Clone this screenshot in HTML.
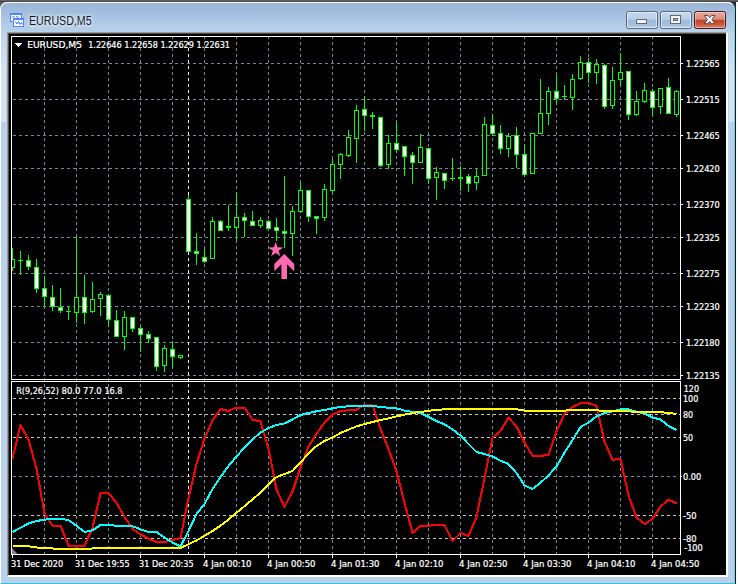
<!DOCTYPE html>
<html><head><meta charset="utf-8"><title>EURUSD,M5</title>
<style>
html,body{margin:0;padding:0;background:#fff;}
body{width:738px;height:584px;overflow:hidden;position:relative;font-family:"Liberation Sans",sans-serif;}
#win{position:absolute;left:0;top:2px;width:735px;height:582px;box-sizing:border-box;
 background:linear-gradient(#98b4d4 0px,#a3bedd 10px,#b4cde8 24px,#b9d1ea 30px,#b9d1ea 100%);
 border-top-left-radius:7px;border-top-right-radius:7px;}
#hl{position:absolute;left:0;top:2px;width:735px;height:582px;box-sizing:border-box;border-left:1px solid #fff;border-top:1px solid #fff;border-right:1px solid #5fd8f0;border-bottom:1px solid #28c4e4;border-top-left-radius:7px;border-top-right-radius:7px;}
#top{position:absolute;left:0;top:0;width:738px;height:2px;background:linear-gradient(#6e6e6e,#3c3c3c);}
#client{position:absolute;left:7px;top:32px;width:721px;height:545px;box-sizing:border-box;background:#000;
 border-left:1px solid #9a9a9a;border-top:1px solid #9a9a9a;border-right:2px solid #fff;border-bottom:2px solid #fff;}
#client2{position:absolute;left:8px;top:33px;width:718px;height:542px;box-sizing:border-box;border-left:1px solid #505050;border-top:1px solid #505050;}
#title{position:absolute;left:29px;top:13px;font-size:12.5px;line-height:16px;color:#0a0a14;opacity:.92;white-space:nowrap;transform-origin:0 0;transform:scaleX(0.85);text-shadow:0 0 4px #fff,0 0 6px #fff;}
.btn{position:absolute;top:11px;height:18px;width:32px;box-sizing:border-box;border:1px solid #56677f;border-radius:2.5px;
 background:linear-gradient(#c4d7ee 0%,#b9cfe9 46%,#9fbadb 50%,#a6c0df 80%,#b7cfea 100%);box-shadow:inset 0 0 0 1px rgba(255,255,255,.55);}
#bclose{border-color:#4a1a22;background:linear-gradient(#e8aa9c 0%,#dc8a76 46%,#c0442b 50%,#c95437 75%,#d98a72 100%);box-shadow:inset 0 0 0 1px rgba(255,255,255,.35);}
svg#c{position:absolute;left:0;top:0;}
</style></head><body>
<div id="top"></div><div style="position:absolute;left:735px;top:2px;width:1px;height:582px;background:#1c1212"></div><div style="position:absolute;left:0;top:2px;width:8px;height:8px;background:#585858"></div><div style="position:absolute;left:727px;top:2px;width:9px;height:8px;background:#2a2a2a"></div>
<div id="win"></div><div id="hl"></div>
<div id="title">EURUSD,M5</div>
<div class="btn" style="left:626px"></div>
<div class="btn" style="left:660px"></div>
<div class="btn" id="bclose" style="left:694px"></div>
<div style="position:absolute;left:1px;top:32px;width:5px;height:90px;background:linear-gradient(rgba(255,255,255,.05),rgba(255,255,255,.38) 40%,rgba(255,255,255,.38))"></div><div style="position:absolute;left:729px;top:32px;width:5px;height:90px;background:linear-gradient(rgba(255,255,255,.05),rgba(255,255,255,.38) 40%,rgba(255,255,255,.38))"></div><div id="client"></div><div id="client2"></div>
<svg width="738" height="40" style="position:absolute;left:0;top:0">
<!-- app icon -->
<g shape-rendering="crispEdges">
<rect x="10" y="13" width="12" height="9" fill="#4a86ff"/>
<rect x="11" y="15" width="10" height="6" fill="#fff"/>
<rect x="13" y="18" width="11" height="9" fill="#4a86ff"/>
<rect x="14" y="20" width="9" height="6" fill="#fff"/>
</g>
<polyline points="12,17.5 13.5,16 14.5,17.5" fill="none" stroke="#3b78f5" stroke-width="1"/>
<polyline points="16,16 17,17.5 18.5,16.5" fill="none" stroke="#3b78f5" stroke-width="1"/>
<polyline points="15.5,21.5 17,24 18.5,21.5 20,24.5 21.5,22.5 22.5,24.5" fill="none" stroke="#3b78f5" stroke-width="1"/>
<!-- minimize -->
<rect x="636.5" y="19.5" width="10" height="4" rx="1" fill="#f4f4f4" stroke="#5f6876" stroke-width="1" shape-rendering="crispEdges"/>
<!-- maximize -->
<rect x="670.5" y="15.5" width="10" height="8" rx="1" fill="#f4f4f4" stroke="#5f6876" stroke-width="1" shape-rendering="crispEdges"/>
<rect x="673.5" y="18.5" width="4" height="2" fill="#9db4d2" stroke="#5f6876" stroke-width="1" shape-rendering="crispEdges"/>
<!-- close -->
<path d="M704.4,15.5 L707.9,15.5 L709.7,17.7 L711.5,15.5 L715,15.5 L711.9,19.6 L715,23.7 L711.5,23.7 L709.7,21.5 L707.9,23.7 L704.4,23.7 L707.5,19.6 Z" fill="#fff" stroke="#46384a" stroke-width="0.9" stroke-linejoin="round"/>
</svg>
<svg id="c" width="738" height="584" viewBox="0 0 738 584">
<g shape-rendering="crispEdges" stroke="#778899" stroke-width="1" stroke-dasharray="3 3" fill="none">
<line x1="13" y1="63.5" x2="678" y2="63.5"/>
<line x1="13" y1="99.5" x2="678" y2="99.5"/>
<line x1="13" y1="135.5" x2="678" y2="135.5"/>
<line x1="13" y1="168.5" x2="678" y2="168.5"/>
<line x1="13" y1="204.5" x2="678" y2="204.5"/>
<line x1="13" y1="237.5" x2="678" y2="237.5"/>
<line x1="13" y1="273.5" x2="678" y2="273.5"/>
<line x1="13" y1="306.5" x2="678" y2="306.5"/>
<line x1="13" y1="342.5" x2="678" y2="342.5"/>
<line x1="13" y1="375.5" x2="678" y2="375.5"/>
<line x1="13" y1="476.5" x2="678" y2="476.5"/>
<line x1="44.5" y1="36" x2="44.5" y2="554"/>
<line x1="76.5" y1="36" x2="76.5" y2="554"/>
<line x1="108.5" y1="36" x2="108.5" y2="554"/>
<line x1="140.5" y1="36" x2="140.5" y2="554"/>
<line x1="172.5" y1="36" x2="172.5" y2="554"/>
<line x1="204.5" y1="36" x2="204.5" y2="554"/>
<line x1="236.5" y1="36" x2="236.5" y2="554"/>
<line x1="268.5" y1="36" x2="268.5" y2="554"/>
<line x1="300.5" y1="36" x2="300.5" y2="554"/>
<line x1="332.5" y1="36" x2="332.5" y2="554"/>
<line x1="364.5" y1="36" x2="364.5" y2="554"/>
<line x1="396.5" y1="36" x2="396.5" y2="554"/>
<line x1="428.5" y1="36" x2="428.5" y2="554"/>
<line x1="460.5" y1="36" x2="460.5" y2="554"/>
<line x1="492.5" y1="36" x2="492.5" y2="554"/>
<line x1="524.5" y1="36" x2="524.5" y2="554"/>
<line x1="556.5" y1="36" x2="556.5" y2="554"/>
<line x1="588.5" y1="36" x2="588.5" y2="554"/>
<line x1="620.5" y1="36" x2="620.5" y2="554"/>
<line x1="652.5" y1="36" x2="652.5" y2="554"/>
</g>
<g shape-rendering="crispEdges" stroke="#c8c8c8" stroke-width="1" stroke-dasharray="3 3" fill="none">
<line x1="13" y1="398.5" x2="680" y2="398.5"/>
<line x1="13" y1="414.5" x2="680" y2="414.5"/>
<line x1="13" y1="437.5" x2="680" y2="437.5"/>
<line x1="13" y1="515.5" x2="680" y2="515.5"/>
<line x1="13" y1="538.5" x2="680" y2="538.5"/>
</g>
<line shape-rendering="crispEdges" x1="188.5" y1="36" x2="188.5" y2="554" stroke="#f4f4f4" stroke-width="1" stroke-dasharray="3 3"/>
<clipPath id="cc"><rect x="12" y="37" width="668" height="342"/></clipPath>
<g shape-rendering="crispEdges" clip-path="url(#cc)">
<rect x="12" y="248" width="1" height="23" fill="#0f0"/>
<rect x="10" y="259" width="5" height="9" fill="#0f0"/>
<rect x="11" y="260" width="3" height="7" fill="#000"/>
<rect x="20" y="251" width="1" height="24" fill="#0f0"/>
<rect x="18" y="260" width="5" height="1" fill="#0f0"/>
<rect x="28" y="255" width="1" height="15" fill="#0f0"/>
<rect x="26" y="260" width="5" height="7" fill="#0f0"/>
<rect x="27" y="261" width="3" height="5" fill="#fff"/>
<rect x="36" y="259" width="1" height="34" fill="#0f0"/>
<rect x="34" y="267" width="5" height="22" fill="#0f0"/>
<rect x="35" y="268" width="3" height="20" fill="#fff"/>
<rect x="44" y="276" width="1" height="31" fill="#0f0"/>
<rect x="42" y="288" width="5" height="9" fill="#0f0"/>
<rect x="43" y="289" width="3" height="7" fill="#fff"/>
<rect x="52" y="285" width="1" height="26" fill="#0f0"/>
<rect x="50" y="297" width="5" height="10" fill="#0f0"/>
<rect x="51" y="298" width="3" height="8" fill="#fff"/>
<rect x="60" y="288" width="1" height="25" fill="#0f0"/>
<rect x="58" y="307" width="5" height="4" fill="#0f0"/>
<rect x="59" y="308" width="3" height="2" fill="#fff"/>
<rect x="68" y="306" width="1" height="14" fill="#0f0"/>
<rect x="66" y="311" width="5" height="1" fill="#0f0"/>
<rect x="76" y="237" width="1" height="86" fill="#0f0"/>
<rect x="74" y="297" width="5" height="16" fill="#0f0"/>
<rect x="75" y="298" width="3" height="14" fill="#000"/>
<rect x="84" y="275" width="1" height="49" fill="#0f0"/>
<rect x="82" y="297" width="5" height="16" fill="#0f0"/>
<rect x="83" y="298" width="3" height="14" fill="#fff"/>
<rect x="92" y="282" width="1" height="31" fill="#0f0"/>
<rect x="90" y="299" width="5" height="13" fill="#0f0"/>
<rect x="91" y="300" width="3" height="11" fill="#000"/>
<rect x="100" y="292" width="1" height="24" fill="#0f0"/>
<rect x="98" y="294" width="5" height="5" fill="#0f0"/>
<rect x="99" y="295" width="3" height="3" fill="#000"/>
<rect x="108" y="295" width="1" height="32" fill="#0f0"/>
<rect x="106" y="295" width="5" height="25" fill="#0f0"/>
<rect x="107" y="296" width="3" height="23" fill="#fff"/>
<rect x="116" y="310" width="1" height="27" fill="#0f0"/>
<rect x="114" y="320" width="5" height="17" fill="#0f0"/>
<rect x="115" y="321" width="3" height="15" fill="#fff"/>
<rect x="124" y="311" width="1" height="39" fill="#0f0"/>
<rect x="122" y="317" width="5" height="20" fill="#0f0"/>
<rect x="123" y="318" width="3" height="18" fill="#000"/>
<rect x="132" y="317" width="1" height="15" fill="#0f0"/>
<rect x="130" y="317" width="5" height="12" fill="#0f0"/>
<rect x="131" y="318" width="3" height="10" fill="#fff"/>
<rect x="140" y="326" width="1" height="26" fill="#0f0"/>
<rect x="138" y="328" width="5" height="7" fill="#0f0"/>
<rect x="139" y="329" width="3" height="5" fill="#fff"/>
<rect x="148" y="331" width="1" height="12" fill="#0f0"/>
<rect x="146" y="334" width="5" height="5" fill="#0f0"/>
<rect x="147" y="335" width="3" height="3" fill="#fff"/>
<rect x="156" y="337" width="1" height="34" fill="#0f0"/>
<rect x="154" y="337" width="5" height="30" fill="#0f0"/>
<rect x="155" y="338" width="3" height="28" fill="#fff"/>
<rect x="164" y="345" width="1" height="27" fill="#0f0"/>
<rect x="162" y="348" width="5" height="18" fill="#0f0"/>
<rect x="163" y="349" width="3" height="16" fill="#000"/>
<rect x="172" y="341" width="1" height="27" fill="#0f0"/>
<rect x="170" y="349" width="5" height="8" fill="#0f0"/>
<rect x="171" y="350" width="3" height="6" fill="#fff"/>
<rect x="180" y="355" width="1" height="4" fill="#0f0"/>
<rect x="178" y="355" width="5" height="3" fill="#0f0"/>
<rect x="179" y="356" width="3" height="1" fill="#000"/>
<rect x="188" y="195" width="1" height="57" fill="#0f0"/>
<rect x="186" y="199" width="5" height="53" fill="#0f0"/>
<rect x="187" y="200" width="3" height="51" fill="#fff"/>
<rect x="196" y="233" width="1" height="32" fill="#0f0"/>
<rect x="194" y="251" width="5" height="3" fill="#0f0"/>
<rect x="195" y="252" width="3" height="1" fill="#fff"/>
<rect x="204" y="249" width="1" height="14" fill="#0f0"/>
<rect x="202" y="257" width="5" height="5" fill="#0f0"/>
<rect x="203" y="258" width="3" height="3" fill="#fff"/>
<rect x="212" y="217" width="1" height="42" fill="#0f0"/>
<rect x="210" y="221" width="5" height="38" fill="#0f0"/>
<rect x="211" y="222" width="3" height="36" fill="#000"/>
<rect x="220" y="220" width="1" height="11" fill="#0f0"/>
<rect x="218" y="221" width="5" height="10" fill="#0f0"/>
<rect x="219" y="222" width="3" height="8" fill="#fff"/>
<rect x="228" y="205" width="1" height="26" fill="#0f0"/>
<rect x="226" y="226" width="5" height="2" fill="#0f0"/>
<rect x="236" y="192" width="1" height="49" fill="#0f0"/>
<rect x="234" y="217" width="5" height="11" fill="#0f0"/>
<rect x="235" y="218" width="3" height="9" fill="#000"/>
<rect x="244" y="213" width="1" height="24" fill="#0f0"/>
<rect x="242" y="217" width="5" height="4" fill="#0f0"/>
<rect x="243" y="218" width="3" height="2" fill="#fff"/>
<rect x="252" y="211" width="1" height="15" fill="#0f0"/>
<rect x="250" y="221" width="5" height="5" fill="#0f0"/>
<rect x="251" y="222" width="3" height="3" fill="#fff"/>
<rect x="260" y="217" width="1" height="11" fill="#0f0"/>
<rect x="258" y="220" width="5" height="6" fill="#0f0"/>
<rect x="259" y="221" width="3" height="4" fill="#000"/>
<rect x="268" y="220" width="1" height="9" fill="#0f0"/>
<rect x="266" y="221" width="5" height="8" fill="#0f0"/>
<rect x="267" y="222" width="3" height="6" fill="#fff"/>
<rect x="276" y="218" width="1" height="23" fill="#0f0"/>
<rect x="274" y="227" width="5" height="4" fill="#0f0"/>
<rect x="275" y="228" width="3" height="2" fill="#fff"/>
<rect x="284" y="176" width="1" height="72" fill="#0f0"/>
<rect x="282" y="231" width="5" height="3" fill="#0f0"/>
<rect x="283" y="232" width="3" height="1" fill="#fff"/>
<rect x="292" y="206" width="1" height="50" fill="#0f0"/>
<rect x="290" y="211" width="5" height="23" fill="#0f0"/>
<rect x="291" y="212" width="3" height="21" fill="#000"/>
<rect x="300" y="183" width="1" height="30" fill="#0f0"/>
<rect x="298" y="190" width="5" height="22" fill="#0f0"/>
<rect x="299" y="191" width="3" height="20" fill="#000"/>
<rect x="308" y="190" width="1" height="32" fill="#0f0"/>
<rect x="306" y="190" width="5" height="27" fill="#0f0"/>
<rect x="307" y="191" width="3" height="25" fill="#fff"/>
<rect x="316" y="216" width="1" height="18" fill="#0f0"/>
<rect x="314" y="216" width="5" height="3" fill="#0f0"/>
<rect x="315" y="217" width="3" height="1" fill="#fff"/>
<rect x="324" y="184" width="1" height="37" fill="#0f0"/>
<rect x="322" y="189" width="5" height="29" fill="#0f0"/>
<rect x="323" y="190" width="3" height="27" fill="#000"/>
<rect x="332" y="159" width="1" height="34" fill="#0f0"/>
<rect x="330" y="164" width="5" height="27" fill="#0f0"/>
<rect x="331" y="165" width="3" height="25" fill="#000"/>
<rect x="340" y="153" width="1" height="26" fill="#0f0"/>
<rect x="338" y="154" width="5" height="11" fill="#0f0"/>
<rect x="339" y="155" width="3" height="9" fill="#000"/>
<rect x="348" y="130" width="1" height="27" fill="#0f0"/>
<rect x="346" y="137" width="5" height="19" fill="#0f0"/>
<rect x="347" y="138" width="3" height="17" fill="#000"/>
<rect x="356" y="105" width="1" height="58" fill="#0f0"/>
<rect x="354" y="110" width="5" height="29" fill="#0f0"/>
<rect x="355" y="111" width="3" height="27" fill="#000"/>
<rect x="364" y="96" width="1" height="35" fill="#0f0"/>
<rect x="362" y="109" width="5" height="7" fill="#0f0"/>
<rect x="363" y="110" width="3" height="5" fill="#fff"/>
<rect x="372" y="112" width="1" height="17" fill="#0f0"/>
<rect x="370" y="115" width="5" height="2" fill="#0f0"/>
<rect x="380" y="117" width="1" height="50" fill="#0f0"/>
<rect x="378" y="117" width="5" height="49" fill="#0f0"/>
<rect x="379" y="118" width="3" height="47" fill="#fff"/>
<rect x="388" y="135" width="1" height="34" fill="#0f0"/>
<rect x="386" y="143" width="5" height="22" fill="#0f0"/>
<rect x="387" y="144" width="3" height="20" fill="#000"/>
<rect x="396" y="122" width="1" height="30" fill="#0f0"/>
<rect x="394" y="143" width="5" height="7" fill="#0f0"/>
<rect x="395" y="144" width="3" height="5" fill="#fff"/>
<rect x="404" y="146" width="1" height="30" fill="#0f0"/>
<rect x="402" y="146" width="5" height="11" fill="#0f0"/>
<rect x="403" y="147" width="3" height="9" fill="#fff"/>
<rect x="412" y="152" width="1" height="32" fill="#0f0"/>
<rect x="410" y="155" width="5" height="8" fill="#0f0"/>
<rect x="411" y="156" width="3" height="6" fill="#fff"/>
<rect x="420" y="134" width="1" height="29" fill="#0f0"/>
<rect x="418" y="147" width="5" height="16" fill="#0f0"/>
<rect x="419" y="148" width="3" height="14" fill="#000"/>
<rect x="428" y="148" width="1" height="36" fill="#0f0"/>
<rect x="426" y="148" width="5" height="31" fill="#0f0"/>
<rect x="427" y="149" width="3" height="29" fill="#fff"/>
<rect x="436" y="167" width="1" height="33" fill="#0f0"/>
<rect x="434" y="172" width="5" height="6" fill="#0f0"/>
<rect x="435" y="173" width="3" height="4" fill="#000"/>
<rect x="444" y="173" width="1" height="16" fill="#0f0"/>
<rect x="442" y="173" width="5" height="8" fill="#0f0"/>
<rect x="443" y="174" width="3" height="6" fill="#fff"/>
<rect x="452" y="158" width="1" height="23" fill="#0f0"/>
<rect x="450" y="178" width="5" height="1" fill="#0f0"/>
<rect x="460" y="166" width="1" height="25" fill="#0f0"/>
<rect x="458" y="177" width="5" height="2" fill="#0f0"/>
<rect x="468" y="174" width="1" height="18" fill="#0f0"/>
<rect x="466" y="176" width="5" height="8" fill="#0f0"/>
<rect x="467" y="177" width="3" height="6" fill="#fff"/>
<rect x="476" y="169" width="1" height="21" fill="#0f0"/>
<rect x="474" y="176" width="5" height="7" fill="#0f0"/>
<rect x="475" y="177" width="3" height="5" fill="#000"/>
<rect x="484" y="117" width="1" height="59" fill="#0f0"/>
<rect x="482" y="124" width="5" height="52" fill="#0f0"/>
<rect x="483" y="125" width="3" height="50" fill="#000"/>
<rect x="492" y="114" width="1" height="22" fill="#0f0"/>
<rect x="490" y="125" width="5" height="9" fill="#0f0"/>
<rect x="491" y="126" width="3" height="7" fill="#fff"/>
<rect x="500" y="125" width="1" height="29" fill="#0f0"/>
<rect x="498" y="133" width="5" height="16" fill="#0f0"/>
<rect x="499" y="134" width="3" height="14" fill="#fff"/>
<rect x="508" y="133" width="1" height="24" fill="#0f0"/>
<rect x="506" y="136" width="5" height="13" fill="#0f0"/>
<rect x="507" y="137" width="3" height="11" fill="#000"/>
<rect x="516" y="127" width="1" height="41" fill="#0f0"/>
<rect x="514" y="135" width="5" height="20" fill="#0f0"/>
<rect x="515" y="136" width="3" height="18" fill="#fff"/>
<rect x="524" y="144" width="1" height="33" fill="#0f0"/>
<rect x="522" y="154" width="5" height="21" fill="#0f0"/>
<rect x="523" y="155" width="3" height="19" fill="#fff"/>
<rect x="532" y="133" width="1" height="41" fill="#0f0"/>
<rect x="530" y="133" width="5" height="41" fill="#0f0"/>
<rect x="531" y="134" width="3" height="39" fill="#000"/>
<rect x="540" y="79" width="1" height="55" fill="#0f0"/>
<rect x="538" y="113" width="5" height="21" fill="#0f0"/>
<rect x="539" y="114" width="3" height="19" fill="#000"/>
<rect x="548" y="87" width="1" height="38" fill="#0f0"/>
<rect x="546" y="91" width="5" height="23" fill="#0f0"/>
<rect x="547" y="92" width="3" height="21" fill="#000"/>
<rect x="556" y="75" width="1" height="29" fill="#0f0"/>
<rect x="554" y="91" width="5" height="8" fill="#0f0"/>
<rect x="555" y="92" width="3" height="6" fill="#fff"/>
<rect x="564" y="85" width="1" height="15" fill="#0f0"/>
<rect x="562" y="96" width="5" height="1" fill="#0f0"/>
<rect x="572" y="74" width="1" height="36" fill="#0f0"/>
<rect x="570" y="79" width="5" height="19" fill="#0f0"/>
<rect x="571" y="80" width="3" height="17" fill="#000"/>
<rect x="580" y="56" width="1" height="24" fill="#0f0"/>
<rect x="578" y="62" width="5" height="17" fill="#0f0"/>
<rect x="579" y="63" width="3" height="15" fill="#000"/>
<rect x="588" y="58" width="1" height="25" fill="#0f0"/>
<rect x="586" y="62" width="5" height="11" fill="#0f0"/>
<rect x="587" y="63" width="3" height="9" fill="#fff"/>
<rect x="596" y="59" width="1" height="25" fill="#0f0"/>
<rect x="594" y="64" width="5" height="9" fill="#0f0"/>
<rect x="595" y="65" width="3" height="7" fill="#000"/>
<rect x="604" y="64" width="1" height="45" fill="#0f0"/>
<rect x="602" y="65" width="5" height="42" fill="#0f0"/>
<rect x="603" y="66" width="3" height="40" fill="#fff"/>
<rect x="612" y="67" width="1" height="42" fill="#0f0"/>
<rect x="610" y="80" width="5" height="26" fill="#0f0"/>
<rect x="611" y="81" width="3" height="24" fill="#000"/>
<rect x="620" y="53" width="1" height="33" fill="#0f0"/>
<rect x="618" y="72" width="5" height="8" fill="#0f0"/>
<rect x="619" y="73" width="3" height="6" fill="#000"/>
<rect x="628" y="71" width="1" height="49" fill="#0f0"/>
<rect x="626" y="71" width="5" height="44" fill="#0f0"/>
<rect x="627" y="72" width="3" height="42" fill="#fff"/>
<rect x="636" y="91" width="1" height="25" fill="#0f0"/>
<rect x="634" y="101" width="5" height="14" fill="#0f0"/>
<rect x="635" y="102" width="3" height="12" fill="#000"/>
<rect x="644" y="83" width="1" height="20" fill="#0f0"/>
<rect x="642" y="90" width="5" height="12" fill="#0f0"/>
<rect x="643" y="91" width="3" height="10" fill="#000"/>
<rect x="652" y="89" width="1" height="27" fill="#0f0"/>
<rect x="650" y="91" width="5" height="17" fill="#0f0"/>
<rect x="651" y="92" width="3" height="15" fill="#fff"/>
<rect x="660" y="88" width="1" height="26" fill="#0f0"/>
<rect x="658" y="88" width="5" height="19" fill="#0f0"/>
<rect x="659" y="89" width="3" height="17" fill="#000"/>
<rect x="668" y="78" width="1" height="36" fill="#0f0"/>
<rect x="666" y="87" width="5" height="27" fill="#0f0"/>
<rect x="667" y="88" width="3" height="25" fill="#fff"/>
<rect x="676" y="90" width="1" height="27" fill="#0f0"/>
<rect x="674" y="91" width="5" height="24" fill="#0f0"/>
<rect x="675" y="92" width="3" height="22" fill="#000"/>
</g>
<polygon points="275.7,241.9 277.5,247.3 283.2,247.4 278.6,250.8 280.3,256.2 275.7,252.9 271.1,256.2 272.8,250.8 268.2,247.4 273.9,247.3" fill="#ff69b4"/>
<polygon points="284.2,254 294.2,264 294.2,271.2 287,264.2 287,279 281.4,279 281.4,264.2 274.3,271.2 274.3,264" fill="#ff69b4"/>
<clipPath id="ic"><rect x="12" y="382" width="668" height="172"/></clipPath>
<g clip-path="url(#ic)" shape-rendering="crispEdges">
<polyline points="12.5,458.5 20.5,425 28.5,439.5 36.5,468.5 44.5,513.5 52.5,525.5 60.5,525.5 68.5,545.5 76.5,545.5 84.5,545.5 92.5,528 100.5,493.2 108.5,493.2 116.5,502.8 124.5,517 132.5,528.6 140.5,534.5 148.5,538.6 156.5,542 164.5,542 172.5,540 180.5,538 188.5,498 196.5,464 204.5,438.5 212.5,420.6 220.5,409 228.5,411 236.5,407.5 244.5,407.5 252.5,419.5 260.5,421.5 268.5,449 276.5,489.5 284.5,507 292.5,491.5 300.5,467.5 308.5,446.5 316.5,434 324.5,422.5 332.5,414.5 340.5,411 348.5,410.3 356.5,409.6 364.5,405 372.5,405 380.5,429 388.5,449 396.5,471.5 404.5,503 412.5,533 420.5,525.7 428.5,525.7 436.5,525 444.5,525 452.5,541 460.5,533 468.5,536 476.5,517 484.5,478 492.5,437.7 500.5,431 508.5,417.6 516.5,426.4 524.5,442.7 532.5,455.7 540.5,455.7 548.5,455.2 556.5,431.4 564.5,413.8 572.5,407 580.5,403.3 588.5,403 596.5,405.8 604.5,441.4 612.5,459.7 620.5,459 628.5,495.3 636.5,517.4 644.5,524 652.5,519 660.5,506.6 668.5,499.6 676.5,503.6" fill="none" stroke="#f00" stroke-width="2" stroke-linejoin="round"/>
<polyline points="12.5,532 20.5,527.7 28.5,523.5 36.5,521 44.5,519.7 52.5,518.7 60.5,518.7 68.5,520.2 76.5,525.7 84.5,532 92.5,530.3 100.5,525 108.5,525 116.5,525.7 124.5,525.7 132.5,526.2 140.5,529.3 148.5,532 156.5,532 164.5,537.5 172.5,542.5 180.5,546.5 188.5,531 196.5,514 204.5,504 212.5,489 220.5,477 228.5,466 236.5,456.5 244.5,447.5 252.5,439.5 260.5,432.6 268.5,428 276.5,425 284.5,423.4 292.5,419.4 300.5,415 308.5,413 316.5,411.3 324.5,410 332.5,408.3 340.5,407 348.5,406.3 356.5,405.6 364.5,405.6 372.5,405.8 380.5,407 388.5,407.8 396.5,408.3 404.5,410.6 412.5,412 420.5,413 428.5,417 436.5,421 444.5,424.4 452.5,429.4 460.5,435.7 468.5,444 476.5,452 484.5,454 492.5,456.5 500.5,460.7 508.5,464 516.5,473 524.5,485.3 532.5,489 540.5,482.8 548.5,475.3 556.5,466.5 564.5,452.7 572.5,440.2 580.5,427 588.5,422.6 596.5,416.4 604.5,413 612.5,411.3 620.5,409.3 628.5,409.3 636.5,411.8 644.5,413.3 652.5,417.6 660.5,419.4 668.5,426 676.5,430" fill="none" stroke="#0ff" stroke-width="2" stroke-linejoin="round"/>
<polyline points="12.5,546 20.5,546 28.5,546.3 36.5,547.5 44.5,548 52.5,548.5 60.5,549 68.5,549 76.5,549 84.5,549 92.5,548.5 100.5,548 108.5,548 116.5,548 124.5,548 132.5,548 140.5,548 148.5,548 156.5,548 164.5,548 172.5,548 180.5,548 188.5,544.3 196.5,540.4 204.5,535.8 212.5,531 220.5,525.7 228.5,519.5 236.5,512.7 244.5,506.2 252.5,499.4 260.5,492.6 268.5,484.4 276.5,477 284.5,474 292.5,471 300.5,462.5 308.5,453.5 316.5,446 324.5,441 332.5,437.5 340.5,433 348.5,429.6 356.5,426.4 364.5,424 372.5,422 380.5,420 388.5,418.4 396.5,416.4 404.5,414.6 412.5,413 420.5,412 428.5,410.8 436.5,410 444.5,409.3 452.5,409.3 460.5,409.3 468.5,409.3 476.5,409.3 484.5,409.3 492.5,409.3 500.5,409.3 508.5,409.3 516.5,409.3 524.5,410.6 532.5,410.6 540.5,410.6 548.5,410.6 556.5,410.6 564.5,410.6 572.5,410.1 580.5,410.1 588.5,410.1 596.5,410.1 604.5,411.3 612.5,411.3 620.5,411.3 628.5,411.3 636.5,412.1 644.5,412.1 652.5,412.1 660.5,412.1 668.5,413.1 676.5,413.8" fill="none" stroke="#ff0" stroke-width="2" stroke-linejoin="round"/>
</g>
<g shape-rendering="crispEdges" fill="none" stroke="#fff" stroke-width="1">
<rect x="11.5" y="36.5" width="669" height="343"/>
<rect x="11.5" y="381.5" width="669" height="173"/>
</g>
<g shape-rendering="crispEdges" fill="#fff">
<rect x="681" y="63" width="2" height="1"/>
<rect x="681" y="99" width="2" height="1"/>
<rect x="681" y="135" width="2" height="1"/>
<rect x="681" y="168" width="2" height="1"/>
<rect x="681" y="204" width="2" height="1"/>
<rect x="681" y="237" width="2" height="1"/>
<rect x="681" y="273" width="2" height="1"/>
<rect x="681" y="306" width="2" height="1"/>
<rect x="681" y="342" width="2" height="1"/>
<rect x="681" y="375" width="2" height="1"/>
<rect x="681" y="476" width="1" height="1"/>
<rect x="12" y="555" width="1" height="3"/>
<rect x="76" y="555" width="1" height="3"/>
<rect x="140" y="555" width="1" height="3"/>
<rect x="204" y="555" width="1" height="3"/>
<rect x="268" y="555" width="1" height="3"/>
<rect x="332" y="555" width="1" height="3"/>
<rect x="396" y="555" width="1" height="3"/>
<rect x="460" y="555" width="1" height="3"/>
<rect x="524" y="555" width="1" height="3"/>
<rect x="588" y="555" width="1" height="3"/>
<rect x="652" y="555" width="1" height="3"/>
<polygon points="15,43 22,43 18.5,47"/>
</g>
<polygon points="12,554 12,548.3 17.7,554" fill="#778899"/>
<g font-family="'DejaVu Sans Condensed','Liberation Sans',sans-serif" font-size="9.0px" fill="#fff" stroke="#fff" stroke-width="0.22">
<text x="27.2" y="48" textLength="54.8" lengthAdjust="spacingAndGlyphs">EURUSD,M5</text>
<text x="88.2" y="48" textLength="33.5" lengthAdjust="spacingAndGlyphs">1.22646</text>
<text x="124.30000000000001" y="48" textLength="33.5" lengthAdjust="spacingAndGlyphs">1.22658</text>
<text x="160.4" y="48" textLength="33.5" lengthAdjust="spacingAndGlyphs">1.22629</text>
<text x="196.5" y="48" textLength="33.5" lengthAdjust="spacingAndGlyphs">1.22631</text>
<text x="16.2" y="394" textLength="42.7" lengthAdjust="spacingAndGlyphs">R(9,26,52)</text>
<text x="61.5" y="394" textLength="19" lengthAdjust="spacingAndGlyphs">80.0</text>
<text x="83.1" y="394" textLength="18.6" lengthAdjust="spacingAndGlyphs">77.0</text>
<text x="104.4" y="394" textLength="18" lengthAdjust="spacingAndGlyphs">16.8</text>
<text x="685.9" y="67" textLength="33.9" lengthAdjust="spacingAndGlyphs">1.22565</text>
<text x="685.9" y="103" textLength="33.9" lengthAdjust="spacingAndGlyphs">1.22515</text>
<text x="685.9" y="139" textLength="33.9" lengthAdjust="spacingAndGlyphs">1.22465</text>
<text x="685.9" y="172" textLength="33.9" lengthAdjust="spacingAndGlyphs">1.22420</text>
<text x="685.9" y="208" textLength="33.9" lengthAdjust="spacingAndGlyphs">1.22370</text>
<text x="685.9" y="241" textLength="33.9" lengthAdjust="spacingAndGlyphs">1.22325</text>
<text x="685.9" y="277" textLength="33.9" lengthAdjust="spacingAndGlyphs">1.22275</text>
<text x="685.9" y="310" textLength="33.9" lengthAdjust="spacingAndGlyphs">1.22230</text>
<text x="685.9" y="346" textLength="33.9" lengthAdjust="spacingAndGlyphs">1.22180</text>
<text x="685.9" y="379" textLength="33.9" lengthAdjust="spacingAndGlyphs">1.22135</text>
<text x="683.8" y="392" textLength="15.2" lengthAdjust="spacingAndGlyphs">120</text>
<text x="683.0" y="402" textLength="15.2" lengthAdjust="spacingAndGlyphs">100</text>
<text x="683.0" y="418" textLength="10.2" lengthAdjust="spacingAndGlyphs">80</text>
<text x="683.0" y="441" textLength="10.2" lengthAdjust="spacingAndGlyphs">50</text>
<text x="683.0" y="480" textLength="18.2" lengthAdjust="spacingAndGlyphs">0.00</text>
<text x="683.0" y="519" textLength="13.6" lengthAdjust="spacingAndGlyphs">-50</text>
<text x="683.0" y="542" textLength="13.6" lengthAdjust="spacingAndGlyphs">-80</text>
<text x="684.2" y="551" textLength="18.6" lengthAdjust="spacingAndGlyphs">-100</text>
<text x="11.1" y="567" textLength="52" lengthAdjust="spacingAndGlyphs">31 Dec 2020</text>
<text x="75.1" y="567" textLength="54.6" lengthAdjust="spacingAndGlyphs">31 Dec 19:55</text>
<text x="139.1" y="567" textLength="54.6" lengthAdjust="spacingAndGlyphs">31 Dec 20:35</text>
<text x="203.1" y="567" textLength="48.4" lengthAdjust="spacingAndGlyphs">4 Jan 00:10</text>
<text x="267.1" y="567" textLength="48.4" lengthAdjust="spacingAndGlyphs">4 Jan 00:50</text>
<text x="331.1" y="567" textLength="48.4" lengthAdjust="spacingAndGlyphs">4 Jan 01:30</text>
<text x="395.1" y="567" textLength="48.4" lengthAdjust="spacingAndGlyphs">4 Jan 02:10</text>
<text x="459.1" y="567" textLength="48.4" lengthAdjust="spacingAndGlyphs">4 Jan 02:50</text>
<text x="523.1" y="567" textLength="48.4" lengthAdjust="spacingAndGlyphs">4 Jan 03:30</text>
<text x="587.1" y="567" textLength="48.4" lengthAdjust="spacingAndGlyphs">4 Jan 04:10</text>
<text x="651.1" y="567" textLength="48.4" lengthAdjust="spacingAndGlyphs">4 Jan 04:50</text>
</g>
</svg>
</body></html>
